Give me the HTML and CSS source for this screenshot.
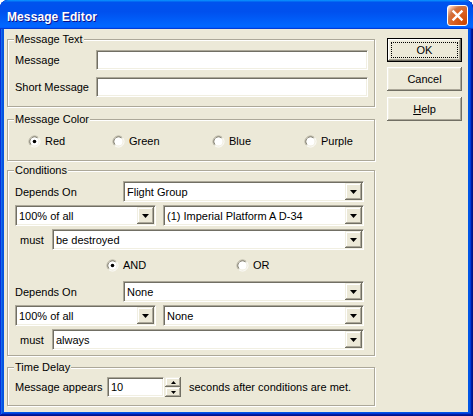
FILE: index.html
```html
<!DOCTYPE html>
<html>
<head>
<meta charset="utf-8">
<title>Message Editor</title>
<link rel="stylesheet" href="styles.css">
</head>
<body>
<div class="window">
  <div class="titlebar">
    <span class="title">Message Editor</span>
    <button class="close" aria-label="Close">
      <svg width="19" height="19" viewBox="0 0 19 19"><path d="M4.6 4.6L14.4 14.4M14.4 4.6L4.6 14.4" stroke="#fff" stroke-width="2.3" fill="none"/></svg>
    </button>
  </div>
  <div class="client">
    <div class="left">
      <div class="group g1">
        <span class="legend">Message Text</span>
        <div class="row r-first">
          <span class="lbl lbl-msg">Message</span>
          <div class="field input"></div>
        </div>
        <div class="row r-second">
          <span class="lbl lbl-msg">Short Message</span>
          <div class="field input"></div>
        </div>
      </div>

      <div class="group g2">
        <span class="legend">Message Color</span>
        <div class="colors">
          <span class="radio">
            <svg width="13" height="13" viewBox="0 0 13 13"><path d="M2.61 10.39A5.5 5.5 0 0 1 10.39 2.61" stroke="#ACA899" fill="none"/><path d="M10.39 2.61A5.5 5.5 0 0 1 2.61 10.39" stroke="#fff" fill="none"/><path d="M3.32 9.68A4.5 4.5 0 0 1 9.68 3.32" stroke="#716F64" fill="none"/><path d="M9.68 3.32A4.5 4.5 0 0 1 3.32 9.68" stroke="#F1EFE2" fill="none"/><circle cx="6.5" cy="6.5" r="4" fill="#fff"/><circle cx="6.5" cy="6.5" r="1.8" fill="#000"/></svg>
            Red
          </span>
          <span class="radio">
            <svg width="13" height="13" viewBox="0 0 13 13"><path d="M2.61 10.39A5.5 5.5 0 0 1 10.39 2.61" stroke="#ACA899" fill="none"/><path d="M10.39 2.61A5.5 5.5 0 0 1 2.61 10.39" stroke="#fff" fill="none"/><path d="M3.32 9.68A4.5 4.5 0 0 1 9.68 3.32" stroke="#716F64" fill="none"/><path d="M9.68 3.32A4.5 4.5 0 0 1 3.32 9.68" stroke="#F1EFE2" fill="none"/><circle cx="6.5" cy="6.5" r="4" fill="#fff"/></svg>
            Green
          </span>
          <span class="radio">
            <svg width="13" height="13" viewBox="0 0 13 13"><path d="M2.61 10.39A5.5 5.5 0 0 1 10.39 2.61" stroke="#ACA899" fill="none"/><path d="M10.39 2.61A5.5 5.5 0 0 1 2.61 10.39" stroke="#fff" fill="none"/><path d="M3.32 9.68A4.5 4.5 0 0 1 9.68 3.32" stroke="#716F64" fill="none"/><path d="M9.68 3.32A4.5 4.5 0 0 1 3.32 9.68" stroke="#F1EFE2" fill="none"/><circle cx="6.5" cy="6.5" r="4" fill="#fff"/></svg>
            Blue
          </span>
          <span class="radio">
            <svg width="13" height="13" viewBox="0 0 13 13"><path d="M2.61 10.39A5.5 5.5 0 0 1 10.39 2.61" stroke="#ACA899" fill="none"/><path d="M10.39 2.61A5.5 5.5 0 0 1 2.61 10.39" stroke="#fff" fill="none"/><path d="M3.32 9.68A4.5 4.5 0 0 1 9.68 3.32" stroke="#716F64" fill="none"/><path d="M9.68 3.32A4.5 4.5 0 0 1 3.32 9.68" stroke="#F1EFE2" fill="none"/><circle cx="6.5" cy="6.5" r="4" fill="#fff"/></svg>
            Purple
          </span>
        </div>
      </div>

      <div class="group g3">
        <span class="legend">Conditions</span>

        <div class="row c-first">
          <span class="lbl lbl-dep">Depends On</span>
          <div class="field combo w-dep"><span class="ctext">Flight Group</span><span class="drop"><svg width="7" height="4" viewBox="0 0 7 4"><path d="M0 0H7L3.5 4Z" fill="#000"/></svg></span></div>
        </div>
        <div class="row c-next">
          <div class="field combo w-pct"><span class="ctext">100% of all</span><span class="drop"><svg width="7" height="4" viewBox="0 0 7 4"><path d="M0 0H7L3.5 4Z" fill="#000"/></svg></span></div>
          <div class="field combo w-tgt"><span class="ctext">(1) Imperial Platform A D-34</span><span class="drop"><svg width="7" height="4" viewBox="0 0 7 4"><path d="M0 0H7L3.5 4Z" fill="#000"/></svg></span></div>
        </div>
        <div class="row c-next">
          <span class="lbl lbl-must">must</span>
          <div class="field combo w-must"><span class="ctext">be destroyed</span><span class="drop"><svg width="7" height="4" viewBox="0 0 7 4"><path d="M0 0H7L3.5 4Z" fill="#000"/></svg></span></div>
        </div>

        <div class="andor">
          <span class="radio">
            <svg width="13" height="13" viewBox="0 0 13 13"><path d="M2.61 10.39A5.5 5.5 0 0 1 10.39 2.61" stroke="#ACA899" fill="none"/><path d="M10.39 2.61A5.5 5.5 0 0 1 2.61 10.39" stroke="#fff" fill="none"/><path d="M3.32 9.68A4.5 4.5 0 0 1 9.68 3.32" stroke="#716F64" fill="none"/><path d="M9.68 3.32A4.5 4.5 0 0 1 3.32 9.68" stroke="#F1EFE2" fill="none"/><circle cx="6.5" cy="6.5" r="4" fill="#fff"/><circle cx="6.5" cy="6.5" r="1.8" fill="#000"/></svg>
            AND
          </span>
          <span class="radio">
            <svg width="13" height="13" viewBox="0 0 13 13"><path d="M2.61 10.39A5.5 5.5 0 0 1 10.39 2.61" stroke="#ACA899" fill="none"/><path d="M10.39 2.61A5.5 5.5 0 0 1 2.61 10.39" stroke="#fff" fill="none"/><path d="M3.32 9.68A4.5 4.5 0 0 1 9.68 3.32" stroke="#716F64" fill="none"/><path d="M9.68 3.32A4.5 4.5 0 0 1 3.32 9.68" stroke="#F1EFE2" fill="none"/><circle cx="6.5" cy="6.5" r="4" fill="#fff"/></svg>
            OR
          </span>
        </div>

        <div class="row c-second">
          <span class="lbl lbl-dep">Depends On</span>
          <div class="field combo w-dep"><span class="ctext">None</span><span class="drop"><svg width="7" height="4" viewBox="0 0 7 4"><path d="M0 0H7L3.5 4Z" fill="#000"/></svg></span></div>
        </div>
        <div class="row c-next">
          <div class="field combo w-pct"><span class="ctext">100% of all</span><span class="drop"><svg width="7" height="4" viewBox="0 0 7 4"><path d="M0 0H7L3.5 4Z" fill="#000"/></svg></span></div>
          <div class="field combo w-tgt"><span class="ctext">None</span><span class="drop"><svg width="7" height="4" viewBox="0 0 7 4"><path d="M0 0H7L3.5 4Z" fill="#000"/></svg></span></div>
        </div>
        <div class="row c-next">
          <span class="lbl lbl-must">must</span>
          <div class="field combo w-must"><span class="ctext">always</span><span class="drop"><svg width="7" height="4" viewBox="0 0 7 4"><path d="M0 0H7L3.5 4Z" fill="#000"/></svg></span></div>
        </div>
      </div>

      <div class="group g4">
        <span class="legend">Time Delay</span>
        <div class="row t-row">
          <span class="lbl lbl-time">Message appears</span>
          <div class="field spinfield"><span class="ctext">10</span></div>
          <div class="spinbtns">
            <span class="spinbtn"><svg width="5" height="3" viewBox="0 0 5 3"><path d="M0 3H5L2.5 0Z" fill="#000"/></svg></span>
            <span class="spinbtn"><svg width="5" height="3" viewBox="0 0 5 3"><path d="M0 0H5L2.5 3Z" fill="#000"/></svg></span>
          </div>
          <span class="after">seconds after conditions are met.</span>
        </div>
      </div>
    </div>

    <div class="right">
      <button class="btn default">OK</button>
      <button class="btn">Cancel</button>
      <button class="btn"><u>H</u>elp</button>
    </div>
  </div>
</div>
</body>
</html>
```

FILE: styles.css
```css
* { box-sizing: border-box; }
html, body { margin: 0; padding: 0; }
html { background: #fff; }
body {
  font-family: "Liberation Sans", Arial, sans-serif;
  font-size: 11px;
  color: #000;
}

.window {
  width: 473px;
  height: 416px;
  display: flex;
  flex-direction: column;
  background: #0055e5;
  border-radius: 8px 8px 0 0;
  overflow: hidden;
  box-shadow: inset -1px -1px #00138c, inset 1px 1px #0831d9,
              inset -2px -2px #001ea0, inset 2px 2px #166aee,
              inset -3px -3px #003bda, inset 3px 3px #0855dd;
}

.titlebar {
  flex: none;
  height: 29px;
  display: flex;
  align-items: flex-start;
  padding: 0 5px 0 7px;
  border-radius: 8px 8px 0 0;
  background: linear-gradient(180deg, #0997ff, #0053ee 8%, #0050ee 40%, #0066ff 88%, #0066ff 93%, #005bff 95%, #003dd7 96%, #003dd7);
}
.title {
  flex: 1;
  margin-top: 10px;
  line-height: 14px;
  color: #fff;
  font-weight: bold;
  font-size: 12px;
  letter-spacing: 0.1px;
  text-shadow: 1px 1px #0f1089;
}
.close {
  margin-top: 5px;
  width: 21px;
  height: 21px;
  padding: 0;
  border: 1px solid #fff;
  border-radius: 3px;
  display: flex;
  align-items: center;
  justify-content: center;
  background: radial-gradient(circle at 90% 90%, #cc4600 0%, #dc6527 55%, #cd7546 70%, #ffccb2 90%, #fff 100%);
}
.close svg { display: block; }

.client {
  flex: 1;
  margin: 0 5px 4px 4px;
  background: #ECE9D8;
  display: flex;
  align-items: flex-start;
}

.left {
  width: 368px;
  margin-left: 3px;
  padding-top: 10px;
  display: flex;
  flex-direction: column;
}

.group {
  border: 1px solid #ACA899;
  box-shadow: inset 1px 1px #fff, 1px 1px #fff;
  padding: 0 6px 0 7px;
  display: flex;
  flex-direction: column;
}
.legend {
  align-self: flex-start;
  margin: -7px 0 0 -1px;
  padding: 0 1px;
  line-height: 13px;
  background: #ECE9D8;
}
.g1 { padding-bottom: 9px; }
.g2 { margin-top: 12px; padding-bottom: 11px; }
.g3 { margin-top: 9px; padding-bottom: 5px; }
.g4 { margin-top: 11px; padding-bottom: 8px; }

.row { display: flex; align-items: center; }
.lbl { flex: none; white-space: nowrap; }
.lbl-msg { width: 81px; }
.lbl-dep { width: 108px; }
.lbl-must { width: 37px; padding-left: 5px; }
.lbl-time { width: 92px; }

.r-first { margin-top: 4px; }
.r-second { margin-top: 7px; }
.c-first { margin-top: 4px; }
.c-next { margin-top: 3px; }
.c-second { margin-top: 8px; }
.t-row { margin-top: 3px; }

.field {
  background: #fff;
  border: 1px solid;
  border-color: #ACA899 #fff #fff #ACA899;
  box-shadow: inset 1px 1px #716F64, inset -1px -1px #F1EFE2;
}
.input { width: 272px; height: 20px; }

.combo {
  height: 21px;
  padding: 1px;
  display: flex;
  align-items: center;
  flex: none;
}
.ctext {
  flex: 1;
  padding-left: 2px;
  white-space: nowrap;
  overflow: hidden;
}
.drop {
  flex: none;
  width: 17px;
  height: 17px;
  background: #ECE9D8;
  box-shadow: inset -1px -1px #716F64, inset 1px 1px #F1EFE2,
              inset -2px -2px #ACA899, inset 2px 2px #fff;
  display: flex;
  align-items: center;
  justify-content: center;
}
.drop svg { display: block; }
.w-dep { width: 241px; }
.w-pct { width: 141px; margin-right: 7px; }
.w-tgt { width: 201px; }
.w-must { width: 312px; }

.colors {
  display: grid;
  grid-template-columns: 84px 100px 92px auto;
  height: 16px;
  align-items: center;
  margin: 7px 0 0 13px;
}
.andor {
  display: grid;
  grid-template-columns: 130px auto;
  height: 16px;
  align-items: center;
  margin: 7px 0 0 91px;
}
.radio {
  display: flex;
  align-items: center;
  gap: 4px;
  white-space: nowrap;
}
.radio svg { display: block; flex: none; }

.spinfield {
  width: 57px;
  height: 20px;
  display: flex;
  align-items: center;
  padding: 1px;
  flex: none;
}
.spinbtns {
  display: flex;
  flex-direction: column;
  width: 16px;
  margin-left: 1px;
  flex: none;
}
.spinbtn {
  height: 10px;
  background: #ECE9D8;
  box-shadow: inset -1px -1px #716F64, inset 1px 1px #F1EFE2,
              inset -2px -2px #ACA899, inset 2px 2px #fff;
  display: flex;
  align-items: center;
  justify-content: center;
}
.spinbtn svg { display: block; }
.after { margin-left: 8px; white-space: nowrap; }

.right {
  margin-left: 12px;
  padding-top: 9px;
  display: flex;
  flex-direction: column;
}
.btn {
  width: 75px;
  height: 24px;
  padding: 0;
  border: none;
  background: #ECE9D8;
  font-family: "Liberation Sans", Arial, sans-serif;
  font-size: 11px;
  color: #000;
  box-shadow: inset -1px -1px #716F64, inset 1px 1px #fff,
              inset -2px -2px #ACA899, inset 2px 2px #F1EFE2;
}
.btn + .btn { margin-top: 5px; }
.btn + .btn + .btn { margin-top: 6px; }
.btn.default {
  border: 1px solid #000;
  outline: 1px dotted #000;
  outline-offset: -5px;
}
.btn u { text-decoration: underline; }
```
